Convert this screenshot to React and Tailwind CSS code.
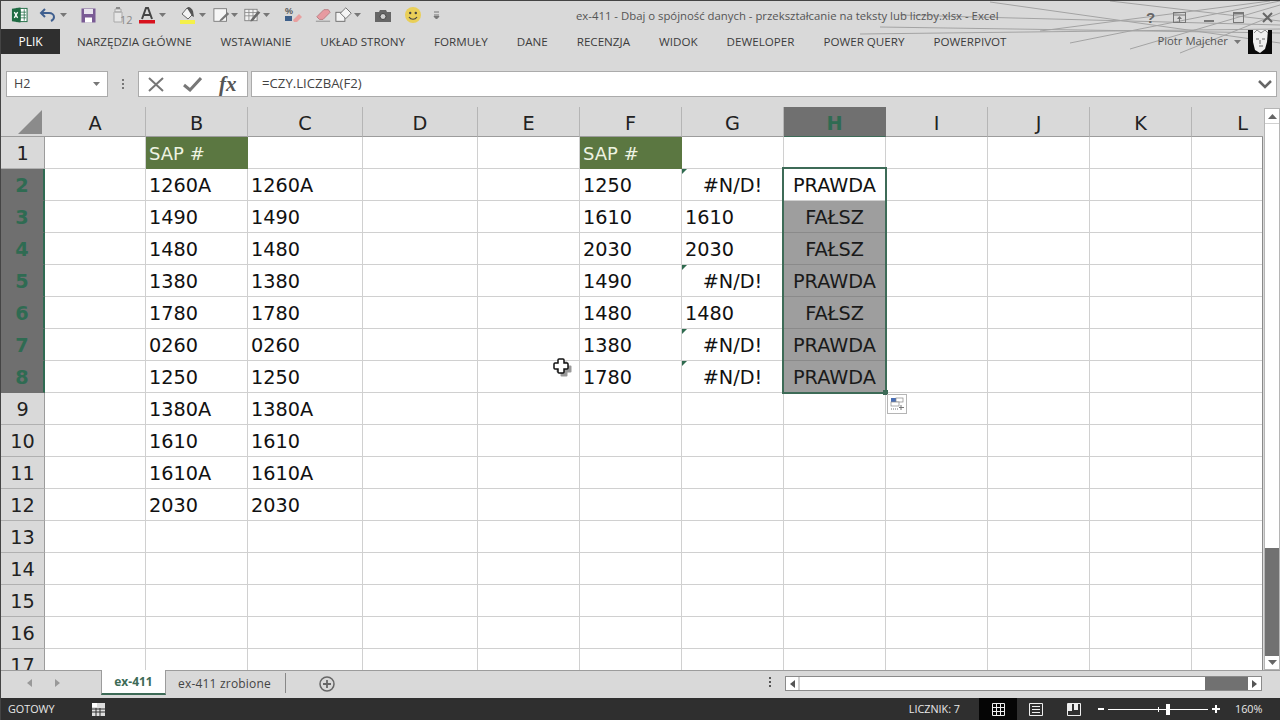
import { Fragment } from 'react'

const columns = [
  { name: 'A', width: 101 },
  { name: 'B', width: 102 },
  { name: 'C', width: 115 },
  { name: 'D', width: 115 },
  { name: 'E', width: 102 },
  { name: 'F', width: 102 },
  { name: 'G', width: 102 },
  { name: 'H', width: 102 },
  { name: 'I', width: 102 },
  { name: 'J', width: 102 },
  { name: 'K', width: 102 },
  { name: 'L', width: 102 },
]

const tabs = ['NARZĘDZIA GŁÓWNE', 'WSTAWIANIE', 'UKŁAD STRONY', 'FORMUŁY', 'DANE', 'RECENZJA', 'WIDOK', 'DEWELOPER', 'POWER QUERY', 'POWERPIVOT']

const colB = ['1260A', '1490', '1480', '1380', '1780', '0260', '1250', '1380A', '1610', '1610A', '2030']
const colC = ['1260A', '1490', '1480', '1380', '1780', '0260', '1250', '1380A', '1610', '1610A', '2030']
const colF = ['1250', '1610', '2030', '1490', '1480', '1380', '1780']
const colG = ['#N/D!', '1610', '2030', '#N/D!', '1480', '#N/D!', '#N/D!']
const colH = ['PRAWDA', 'FAŁSZ', 'FAŁSZ', 'PRAWDA', 'FAŁSZ', 'PRAWDA', 'PRAWDA']

function getCell(col, row) {
  const i = row - 2
  if (row === 1) {
    if (col === 'B' || col === 'F') return { text: 'SAP #', header: true }
    return {}
  }
  if (col === 'B') return { text: colB[i] }
  if (col === 'C') return { text: colC[i] }
  if (col === 'F') return { text: colF[i] }
  if (col === 'G' && colG[i]) {
    const err = colG[i] === '#N/D!'
    return { text: colG[i], center: err, marker: err }
  }
  if (col === 'H' && colH[i]) return { text: colH[i], center: true, selected: row > 2 }
  return {}
}

function Cell({ col, row }) {
  const cell = getCell(col, row)
  return (
    <div
      className={`relative h-8 border-r border-b pl-[3px] pr-[3px] pt-[1px] leading-[31px] whitespace-nowrap overflow-hidden ${
        cell.header
          ? 'bg-[#5b7741] text-[#eef3e2] border-[#5b7741] text-[18px]'
          : cell.selected
            ? 'bg-[#9e9e9e] text-[#1a1a1a] border-b-[#8a8a8a] border-r-[#9e9e9e]'
            : 'bg-white text-[#111] border-[#d0d0d0]'
      } ${cell.center ? 'text-center' : ''}`}
    >
      {cell.marker && <span className="absolute left-0 top-0 w-0 h-0 border-t-[5px] border-r-[5px] border-t-[#2f6b4f] border-r-transparent" />}
      {cell.text}
    </div>
  )
}

function Caret({ className = '' }) {
  return (
    <svg width="7" height="4" viewBox="0 0 7 4" className={className}>
      <path d="M0 0h7L3.500 4z" fill="#777" />
    </svg>
  )
}

function QuickIcons() {
  return (
    <div className="flex items-center h-[28px]">
      {/* excel logo */}
      <svg width="17" height="18" viewBox="0 0 18 18" className="ml-[10px]">
        <rect x="6" y="2" width="11" height="14" fill="#fff" stroke="#1f6b43" />
        <path d="M10 3v12M14 3v12M7 6h9M7 9h9M7 12h9" stroke="#1f6b43" strokeWidth="0.8" />
        <path d="M1 2.500 10 1v16l-9-1.500z" fill="#1f6b43" />
        <path d="M3.500 6 7 12M7 6l-3.500 6" stroke="#fff" strokeWidth="1.400" />
      </svg>
      {/* undo */}
      <svg width="18" height="16" viewBox="0 0 18 16" className="ml-[11px]">
        <path d="M6 2 2 6l4 4" fill="none" stroke="#3f5f8f" strokeWidth="2" />
        <path d="M3 6h7c3 0 5 2 5 4s-1 3-3 4" fill="none" stroke="#3f5f8f" strokeWidth="2" />
      </svg>
      <Caret className="ml-[3px]" />
      {/* save */}
      <svg width="15" height="15" viewBox="0 0 15 15" className="ml-[14px]">
        <rect x="0.500" y="0.500" width="14" height="14" fill="#7a5b95" />
        <rect x="3" y="1" width="9" height="5" fill="#e8e4ee" />
        <rect x="4" y="9.500" width="7" height="5" fill="#fff" />
      </svg>
      {/* font size */}
      <svg width="16" height="18" viewBox="0 0 16 18" className="ml-[16px]">
        <path d="M3 3h6v3H3zM2 6h8v10H2z" fill="#e6e6e6" stroke="#a9a9a9" />
        <path d="M4 1h4v2H4z" fill="#8a8a8a" />
      </svg>
      <span className="text-[11px] text-[#8a8a8a] -ml-[8px] mt-[8px] w-[12px] leading-none">12</span>
      {/* font colour */}
      <svg width="18" height="18" viewBox="0 0 18 18" className="ml-[6px]">
        <path d="M4 13 8 2h2l4 11M5.800 9h6.400" fill="none" stroke="#444" strokeWidth="2" />
        <rect x="1" y="14" width="16" height="3.500" fill="#d8121e" />
      </svg>
      <Caret className="ml-[3px]" />
      {/* fill colour */}
      <svg width="20" height="18" viewBox="0 0 20 18" className="ml-[12px]">
        <path d="M4 8 9 2l6 6-5 5z" fill="#f3f3f3" stroke="#666" />
        <path d="M9 2c1-2 4-1 6 3l1 6-2-1z" fill="#555" />
        <rect x="2" y="14" width="15" height="4" fill="#f4f04a" />
      </svg>
      <Caret className="ml-[1px]" />
      {/* borders and brush */}
      <svg width="18" height="18" viewBox="0 0 20 18" className="ml-[7px]">
        <rect x="1" y="2" width="14" height="14" fill="#f6f6f6" stroke="#777" />
        <path d="M8 14 16 6l2 2-8 7-3 1z" fill="#777" />
      </svg>
      <Caret />
      <svg width="18" height="18" viewBox="0 0 22 18" className="ml-[6px]">
        <rect x="1" y="2" width="15" height="14" fill="#f2f2f2" stroke="#777" />
        <path d="M1 6h15M1 10h15M6 2v14M11 2v14" stroke="#888" />
        <path d="M8 15 17 4l3 2-9 10-3 1z" fill="#6a6a6a" />
      </svg>
      <Caret className="ml-[1px]" />
      {/* percent format */}
      <svg width="18" height="18" viewBox="0 0 18 18" className="ml-[14px]">
        <text x="1" y="8" fontSize="9" fontFamily="Liberation Sans, sans-serif" fontWeight="700" fill="#555">%</text>
        <rect x="1" y="10" width="7" height="5" fill="#3d5f8a" />
        <path d="M9 14 15 8l3 3-5 5h-3z" fill="#e8a0a0" />
      </svg>
      {/* eraser */}
      <svg width="16" height="16" viewBox="0 0 18 16" className="ml-[13px]">
        <path d="M2 10 10 2h5l2 3-8 8H5z" fill="#e79aa0" stroke="#b87a80" />
        <path d="M1 15h16" stroke="#888" />
      </svg>
      {/* shapes */}
      <svg width="18" height="18" viewBox="0 0 20 18" className="ml-[4px]">
        <rect x="1" y="6" width="10" height="10" fill="#f4f4f4" stroke="#666" />
        <path d="M12 1 18 7l-6 6-6-6z" fill="#f4f4f4" stroke="#666" />
      </svg>
      <Caret className="ml-[1px]" />
      {/* camera */}
      <svg width="16" height="13" viewBox="0 0 16 13" className="ml-[14px]">
        <path d="M0 3h4l1-2h6l1 2h4v10H0z" fill="#666" />
        <circle cx="8" cy="7.500" r="3" fill="#cfcfcf" stroke="#444" />
      </svg>
      {/* smiley */}
      <svg width="18" height="18" viewBox="0 0 18 18" className="ml-[13px]">
        <circle cx="9" cy="9" r="8" fill="#e9cf58" />
        <circle cx="6.200" cy="7" r="1.200" fill="#444" />
        <circle cx="11.800" cy="7" r="1.200" fill="#444" />
        <path d="M5 11c2 3 6 3 8 0" fill="none" stroke="#444" strokeWidth="1.200" />
      </svg>
      {/* customize */}
      <svg width="7" height="9" viewBox="0 0 7 9" className="ml-[11px]">
        <path d="M1 1h5" stroke="#777" />
        <path d="M1 4h5M3.500 8 1 5.500h5z" fill="#777" stroke="#777" />
      </svg>
    </div>
  )
}

function TitleLines() {
  return (
    <svg className="absolute right-0 top-0 pointer-events-none" width="420" height="56" viewBox="0 0 420 56">
      <g stroke="#a3a3a3" strokeWidth="1" fill="none">
        <path d="M0 33 420 28M40 14 420 24M130 1 420 42M250 0 420 20M20 26 420 32" />
        <path d="M210 42 420 0M270 48 420 4M320 52 420 12M180 30 410 0" />
      </g>
    </svg>
  )
}

function WindowButtons() {
  return (
    <div className="flex items-center absolute right-[-2px] top-[9px]">
      <div className="w-[29px] flex justify-center">
        <span className="text-[15px] font-bold leading-none text-[#666] font-['Liberation_Sans',sans-serif]">?</span>
      </div>
      <div className="w-[29px] flex justify-center">
        <svg width="13" height="11" viewBox="0 0 13 11">
          <rect x="0.500" y="0.500" width="12" height="10" fill="none" stroke="#777" />
          <path d="M0 3h13" stroke="#777" />
          <path d="M6.500 4 4 7h5zM6 7h1v3H6z" fill="#777" />
        </svg>
      </div>
      <div className="w-[29px] flex justify-center">
        <svg width="10" height="11" viewBox="0 0 10 11"><rect y="8" width="10" height="2" fill="#777" /></svg>
      </div>
      <div className="w-[30px] flex justify-center">
        <svg width="11" height="11" viewBox="0 0 11 11">
          <rect x="0.500" y="0.500" width="10" height="10" fill="none" stroke="#777" />
          <rect width="11" height="2.500" fill="#777" />
        </svg>
      </div>
      <div className="w-[29px] flex justify-center">
        <svg width="11" height="11" viewBox="0 0 11 11">
          <path d="M1 1l9 9M10 1l-9 9" stroke="#666" strokeWidth="2" />
        </svg>
      </div>
    </div>
  )
}

function Avatar() {
  return (
    <svg width="24" height="24" viewBox="0 0 24 24" className="ml-[7px]">
      <rect width="24" height="24" fill="#0a0a0a" />
      <path d="M5 0h15l-1 12-2 7-5 4-5-3-2-8z" fill="#efefef" />
      <path d="M8 9h3M14 9h3M11 16h4M12 10v4" stroke="#666" fill="none" />
      <path d="M6 3l3-3 4 3 4-3 3 3" stroke="#888" fill="none" />
    </svg>
  )
}

export default function App() {
  const rows = Array.from({ length: 16 }, (_, i) => i + 1)
  return (
    <div className="relative w-[1280px] h-[720px] overflow-hidden flex flex-col bg-[#d9d9d9] text-[#333] font-['Open_Sans','Liberation_Sans',sans-serif] border-t border-l border-[#444]">
      <TitleLines />
      {/* Title bar */}
      <div className="relative h-[28px] shrink-0">
        <QuickIcons />
        <div className="absolute left-[575px] top-[7px] text-[11.350px] leading-[15px] text-[#555] whitespace-nowrap">
          ex-411 - Dbaj o spójność danych - przekształcanie na teksty lub liczby.xlsx - Excel
        </div>
        <WindowButtons />
      </div>

      {/* Ribbon tabs */}
      <div className="relative flex items-center h-[25px] shrink-0">
        <div className="w-[59px] h-full bg-[#2f2f2f] text-white text-[12px] flex items-center justify-center">PLIK</div>
        <div className="flex gap-[29px] ml-[17px] text-[11.640px] text-[#3c3c3c] whitespace-nowrap">
          {tabs.map(t => <span key={t}>{t}</span>)}
        </div>
        <div className="ml-auto mr-[8px] flex items-center text-[11.300px] text-[#555]">
          <span>Piotr Majcher</span>
          <Caret className="ml-[6px]" />
          <Avatar />
        </div>
      </div>

      {/* Formula bar */}
      <div className="flex items-stretch h-[26px] mt-[17px] shrink-0 text-[12px]">
        <div className="ml-[5px] w-[102px] bg-white border border-[#ababab] flex items-center justify-between px-[7px] text-[12.500px] text-[#444]">
          <span>H2</span>
          <Caret />
        </div>
        <div className="w-[30px] flex flex-col items-center justify-center gap-[2px]">
          <span className="w-[2px] h-[2px] bg-[#777]" />
          <span className="w-[2px] h-[2px] bg-[#777]" />
          <span className="w-[2px] h-[2px] bg-[#777]" />
        </div>
        <div className="w-[110px] bg-white border border-[#ababab] flex items-center pl-[8px]">
          <svg width="18" height="15" viewBox="0 0 18 15"><path d="M2 1l14 13M16 1 2 14" stroke="#777" strokeWidth="2" /></svg>
          <svg width="19" height="15" viewBox="0 0 19 15" className="ml-[18px]"><path d="M1 8l6 5L18 1" fill="none" stroke="#777" strokeWidth="3" /></svg>
          <span className="ml-[17px] font-['Liberation_Serif',serif] italic font-bold text-[21px] leading-none text-[#555]">fx</span>
        </div>
        <div className="ml-[3px] w-[1026px] bg-white border border-[#ababab] flex items-center pl-[10px] pr-[4px] text-[13.200px] text-[#444] justify-between">
          <span>=CZY.LICZBA(F2)</span>
          <svg width="14" height="9" viewBox="0 0 14 9"><path d="M1 1l6 6 6-6" fill="none" stroke="#666" strokeWidth="2.500" /></svg>
        </div>
      </div>

      {/* Sheet */}
      <div className="relative flex mt-[10px] h-[563px] shrink-0 overflow-hidden">
        <div className="w-[1262px] shrink-0 overflow-hidden font-['DejaVu_Sans',sans-serif] text-[19.250px]">
          <div
            className="grid"
            style={{ gridTemplateColumns: `44px ${columns.map(c => `${c.width}px`).join(' ')}`, gridAutoRows: 'min-content' }}
          >
            {/* Column headers */}
            <div className="h-[30px] bg-[#d9d9d9] border-b border-[#9c9c9c] relative">
              <svg width="24" height="24" viewBox="0 0 24 24" className="absolute right-[3px] bottom-[2px]"><path d="M24 0v24H0z" fill="#8b8b8b" /></svg>
            </div>
            {columns.map(c => (
              <div
                key={c.name}
                className={`h-[30px] pt-[6px] flex items-center justify-center border-b border-r ${
                  c.name === 'H' ? 'bg-[#707070] text-[#2f6b52] font-bold border-[#707070] border-b-[#3d6b57]' : 'bg-[#d9d9d9] text-[#222] border-r-[#b5b5b5] border-b-[#9c9c9c]'
                }`}
              >
                {c.name}
              </div>
            ))}
            {/* Rows */}
            {rows.map(row => {
              const sel = row >= 2 && row <= 8
              return (
                <Fragment key={row}>
                  <div
                    className={`h-8 pt-[3px] flex items-center justify-center border-b ${
                      sel ? 'bg-[#6f6f6f] text-[#2f6b52] font-bold border-b-[#6f6f6f] border-r-2 border-r-[#2f6b52]' : 'bg-[#d9d9d9] text-[#222] border-b-[#b0b0b0] border-r border-r-[#9c9c9c]'
                    }`}
                  >
                    {row}
                  </div>
                  {columns.map(c => <Cell key={c.name} col={c.name} row={row} />)}
                </Fragment>
              )
            })}
            <div className="h-8 pt-[3px] flex items-center justify-center bg-[#d9d9d9] text-[#222] border-r border-r-[#9c9c9c]">17</div>
            {columns.map(c => <div key={c.name} className="h-8 bg-white border-r border-[#d0d0d0]" />)}
          </div>
        </div>

        {/* Vertical scrollbar */}
        <div className="ml-px mt-px flex flex-col w-[16px] bg-white border border-[#b5b5b5]">
          <div className="h-[15px] flex items-center justify-center shrink-0 border-b border-[#d0d0d0]">
            <svg width="9" height="5" viewBox="0 0 9 5"><path d="M4.500 0 9 5H0z" fill="#666" /></svg>
          </div>
          <div className="flex-1" />
          <div className="h-[108px] bg-[#717171] shrink-0" />
          <div className="h-[13px] flex items-center justify-center shrink-0">
            <svg width="9" height="5" viewBox="0 0 9 5"><path d="M0 0h9L4.500 5z" fill="#666" /></svg>
          </div>
        </div>

        {/* Sheet right edge */}
        <div className="absolute left-[1261px] top-[30px] bottom-0 w-px bg-[#8a8a8a]" />

        {/* Selection overlay */}
        <div className="absolute left-[781px] top-[60px] w-[105px] h-[227px] border-2 border-[#3d6b57] pointer-events-none" />
        <div className="absolute left-[882px] top-[283px] w-[5px] h-[5px] bg-[#3d6b57] box-content" />
        {/* Paste options */}
        <div className="absolute left-[886px] top-[287px] w-[20px] h-[20px] bg-white border border-[#b5b5b5] flex items-center justify-center">
          <svg width="14" height="14" viewBox="0 0 14 14">
            <rect x="1" y="1" width="5" height="4" fill="#4a6fb5" />
            <rect x="6" y="1" width="7" height="4" fill="#fff" stroke="#888" strokeWidth="0.700" />
            <rect x="1" y="5" width="8" height="4" fill="#fff" stroke="#888" strokeWidth="0.700" />
            <path d="M1 12h7" stroke="#777" strokeDasharray="1 1" />
            <path d="M11 8v5M9 10.500h5" stroke="#777" />
          </svg>
        </div>
        {/* Mouse cursor */}
        <svg width="20" height="20" viewBox="0 0 20 20" className="absolute left-[552px] top-[251px]">
          <path d="M6 1h5a1 1 0 0 1 1 1v3h3a1 1 0 0 1 1 1v5a1 1 0 0 1-1 1h-3v3a1 1 0 0 1-1 1H6a1 1 0 0 1-1-1v-3H2a1 1 0 0 1-1-1V6a1 1 0 0 1 1-1h3V2a1 1 0 0 1 1-1z" fill="#333" opacity="0.5" transform="translate(2.500 2.500)" />
          <path d="M6 1h4a1 1 0 0 1 1 1v3h3a1 1 0 0 1 1 1v4a1 1 0 0 1-1 1h-3v3a1 1 0 0 1-1 1H6a1 1 0 0 1-1-1v-3H2a1 1 0 0 1-1-1V6a1 1 0 0 1 1-1h3V2a1 1 0 0 1 1-1z" fill="#fff" stroke="#111" strokeWidth="1.500" />
        </svg>
      </div>

      {/* Sheet tabs */}
      <div className="flex items-start h-[28px] shrink-0 text-[12px] border-t border-[#9c9c9c]">
        <div className="w-[100px] h-[24px] flex items-center pl-[26px] gap-[23px]">
          <svg width="5" height="8" viewBox="0 0 5 8"><path d="M5 0v8L0 4z" fill="#999" /></svg>
          <svg width="5" height="8" viewBox="0 0 5 8"><path d="M0 0v8l5-4z" fill="#999" /></svg>
        </div>
        <div className="-mt-px w-[65px] h-[25px] pt-px bg-white border-x border-b-2 border-[#3d6b57] border-x-[#9c9c9c] flex items-center justify-center font-bold text-[#3d6b57]">ex-411</div>
        <div className="h-[25px] pl-[12px] pr-[14px] flex items-center tracking-[0.2px] text-[#444] whitespace-nowrap">ex-411 zrobione</div>
        <div className="w-px h-[20px] bg-[#888] mt-[2px]" />
        <svg width="16" height="16" viewBox="0 0 16 16" className="ml-[33px] mt-[5px]">
          <circle cx="8" cy="8" r="7" fill="none" stroke="#666" strokeWidth="1.500" />
          <path d="M8 4v8M4 8h8" stroke="#666" strokeWidth="1.800" />
        </svg>
        <div className="ml-[434px] mt-[6px] flex flex-col gap-[2px] w-[3px]">
          <span className="w-[2px] h-[2px] bg-[#555]" />
          <span className="w-[2px] h-[2px] bg-[#555]" />
          <span className="w-[2px] h-[2px] bg-[#555]" />
        </div>
        {/* Horizontal scrollbar */}
        <div className="ml-[13px] mt-[5px] w-[477px] h-[15px] flex bg-white border border-[#8a8a8a]">
          <div className="w-[14px] flex items-center justify-center border-r-2 border-[#d0d0d0]">
            <svg width="5" height="8" viewBox="0 0 5 8"><path d="M5 0v8L0 4z" fill="#555" /></svg>
          </div>
          <div className="flex-1" />
          <div className="w-[43px] bg-[#717171]" />
          <div className="w-[13px] flex items-center justify-center">
            <svg width="5" height="8" viewBox="0 0 5 8"><path d="M0 0v8l5-4z" fill="#555" /></svg>
          </div>
        </div>
      </div>

      {/* Status bar */}
      <div className="flex items-center h-[22px] shrink-0 bg-[#2f2f2f] text-[#e8e8e8] text-[10.800px]">
        <span className="ml-[7px]">GOTOWY</span>
        <svg width="13" height="13" viewBox="0 0 13 13" className="ml-[37px]">
          <rect width="13" height="13" fill="#ddd" />
          <path d="M0 6h13M0 9h13M4 5v8M8 5v8" stroke="#2f2f2f" />
          <rect width="5" height="4" fill="#fff" />
        </svg>
        <span className="ml-auto whitespace-nowrap">LICZNIK: 7</span>
        <div className="ml-[19px] w-[38px] h-[22px] bg-[#050505] flex items-center justify-center">
          <svg width="13" height="13" viewBox="0 0 13 13"><path d="M.5.5h12v12H.5zM4.500 0v13M8.500 0v13M0 4.500h13M0 8.500h13" fill="none" stroke="#eee" /></svg>
        </div>
        <svg width="14" height="13" viewBox="0 0 14 13" className="ml-[12px]">
          <path d="M.5.5h13v12H.5z" fill="none" stroke="#eee" />
          <path d="M3 3.500h8M3 6.500h8M3 9.500h8" stroke="#eee" />
        </svg>
        <svg width="14" height="13" viewBox="0 0 14 13" className="ml-[24px]">
          <path d="M.5.5h13v12H.5z" fill="none" stroke="#eee" />
          <path d="M1 1h4v7H1zM7 1h4v6H7z" fill="#eee" />
        </svg>
        <span className="ml-[17px] w-[6px] h-[2px] bg-white" />
        <div className="relative ml-[4px] w-[100px] h-px bg-white">
          <span className="absolute left-[50px] -top-[2px] w-px h-[5px] bg-white" />
          <span className="absolute left-[58px] -top-[5px] w-[4px] h-[11px] bg-white" />
        </div>
        <svg width="8" height="8" viewBox="0 0 8 8" className="ml-[4px]"><path d="M4 0v8M0 4h8" stroke="#fff" strokeWidth="2" /></svg>
        <span className="ml-[15px] mr-[17px] w-[28px] whitespace-nowrap">160%</span>
      </div>
    </div>
  )
}
